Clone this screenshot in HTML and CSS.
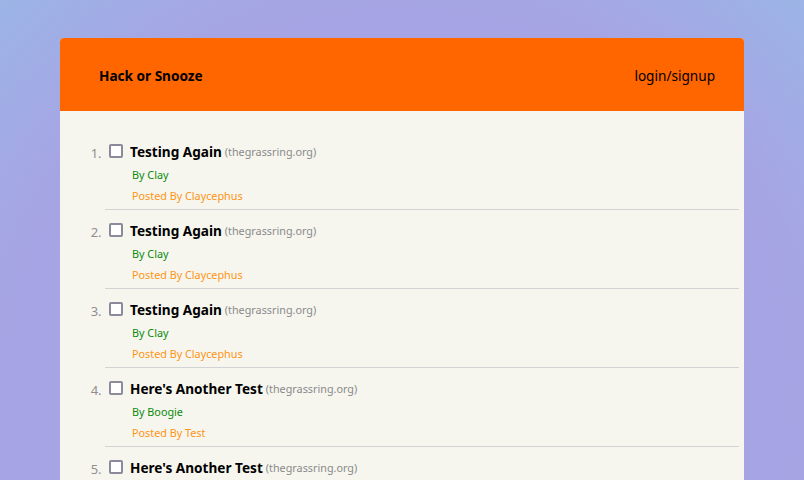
FILE: index.html
```html
<!DOCTYPE html>
<html>
<head>
<meta charset="utf-8">
<link rel="stylesheet" href="styles.css">
</head>
<body>
<div class="container">
  <nav class="navbar">
    <b class="brand">Hack or Snooze</b>
    <a class="login">login/signup</a>
  </nav>
  <ol class="stories">
    <li>
      <div class="title-line"><input type="checkbox" class="cb"><b class="title">Testing Again</b><small class="host">(thegrassring.org)</small></div>
      <div class="author">By Clay</div>
      <div class="user">Posted By Claycephus</div>
    </li>
    <li>
      <div class="title-line"><input type="checkbox" class="cb"><b class="title">Testing Again</b><small class="host">(thegrassring.org)</small></div>
      <div class="author">By Clay</div>
      <div class="user">Posted By Claycephus</div>
    </li>
    <li>
      <div class="title-line"><input type="checkbox" class="cb"><b class="title">Testing Again</b><small class="host">(thegrassring.org)</small></div>
      <div class="author">By Clay</div>
      <div class="user">Posted By Claycephus</div>
    </li>
    <li>
      <div class="title-line"><input type="checkbox" class="cb"><b class="title">Here's Another Test</b><small class="host">(thegrassring.org)</small></div>
      <div class="author">By Boogie</div>
      <div class="user">Posted By Test</div>
    </li>
    <li>
      <div class="title-line"><input type="checkbox" class="cb"><b class="title">Here's Another Test</b><small class="host">(thegrassring.org)</small></div>
      <div class="author">By Boogie</div>
      <div class="user">Posted By Test</div>
    </li>
  </ol>
</div>
</body>
</html>
```

FILE: styles.css
```css
html, body {
  margin: 0;
  padding: 0;
  height: 100%;
}
body {
  font-family: "Noto Sans", sans-serif;
  background: radial-gradient(circle at 50% 85%, #a8a2e3 0px, #a6a5e4 420px, #97bbe8 640px);
  background-attachment: fixed;
  overflow: hidden;
}
.container {
  width: 684px;
  margin: 38px auto 0;
  background: #f6f6ef;
  border-radius: 4px 4px 0 0;
  overflow: hidden;
  height: 442px;
}
.navbar {
  box-sizing: border-box;
  background: #ff6600;
  height: 73px;
  display: flex;
  align-items: center;
  justify-content: space-between;
  padding: 2px 29px 0 39px;
  font-size: 13.6px;
  color: #000;
}
.navbar .brand {
  font-weight: 700;
}
.stories {
  margin: 0;
  padding: 20px 5px 0 45px;
  color: #8f8f8f;
  font-size: 13px;
}
.stories li {
  padding: 9px 0 5px;
  border-bottom: 1px solid #d3d3d3;
}
.stories li::marker {
  color: #8f8f8f;
  font-size: 13px;
}
.title-line {
  height: 22px;
  display: flex;
  align-items: center;
  white-space: nowrap;
}
.cb {
  appearance: none;
  -webkit-appearance: none;
  box-sizing: border-box;
  width: 14px;
  height: 14px;
  margin: 0 7px 0 4px;
  border: 2px solid #8a8a9a;
  border-radius: 2px;
  background: #fff;
}
.title {
  color: #000;
  font-size: 13.6px;
  font-weight: 700;
}
.host {
  color: #8a8a8a;
  font-size: 10.8px;
  margin-left: 3px;
  padding-top: 1px;
}
.author, .user {
  font-size: 10.8px;
  line-height: 16px;
  margin-left: 27px;
}
.author {
  color: #0a8a0a;
  margin-top: 5px;
}
.user {
  color: #ff9413;
  margin-top: 5px;
}
```
